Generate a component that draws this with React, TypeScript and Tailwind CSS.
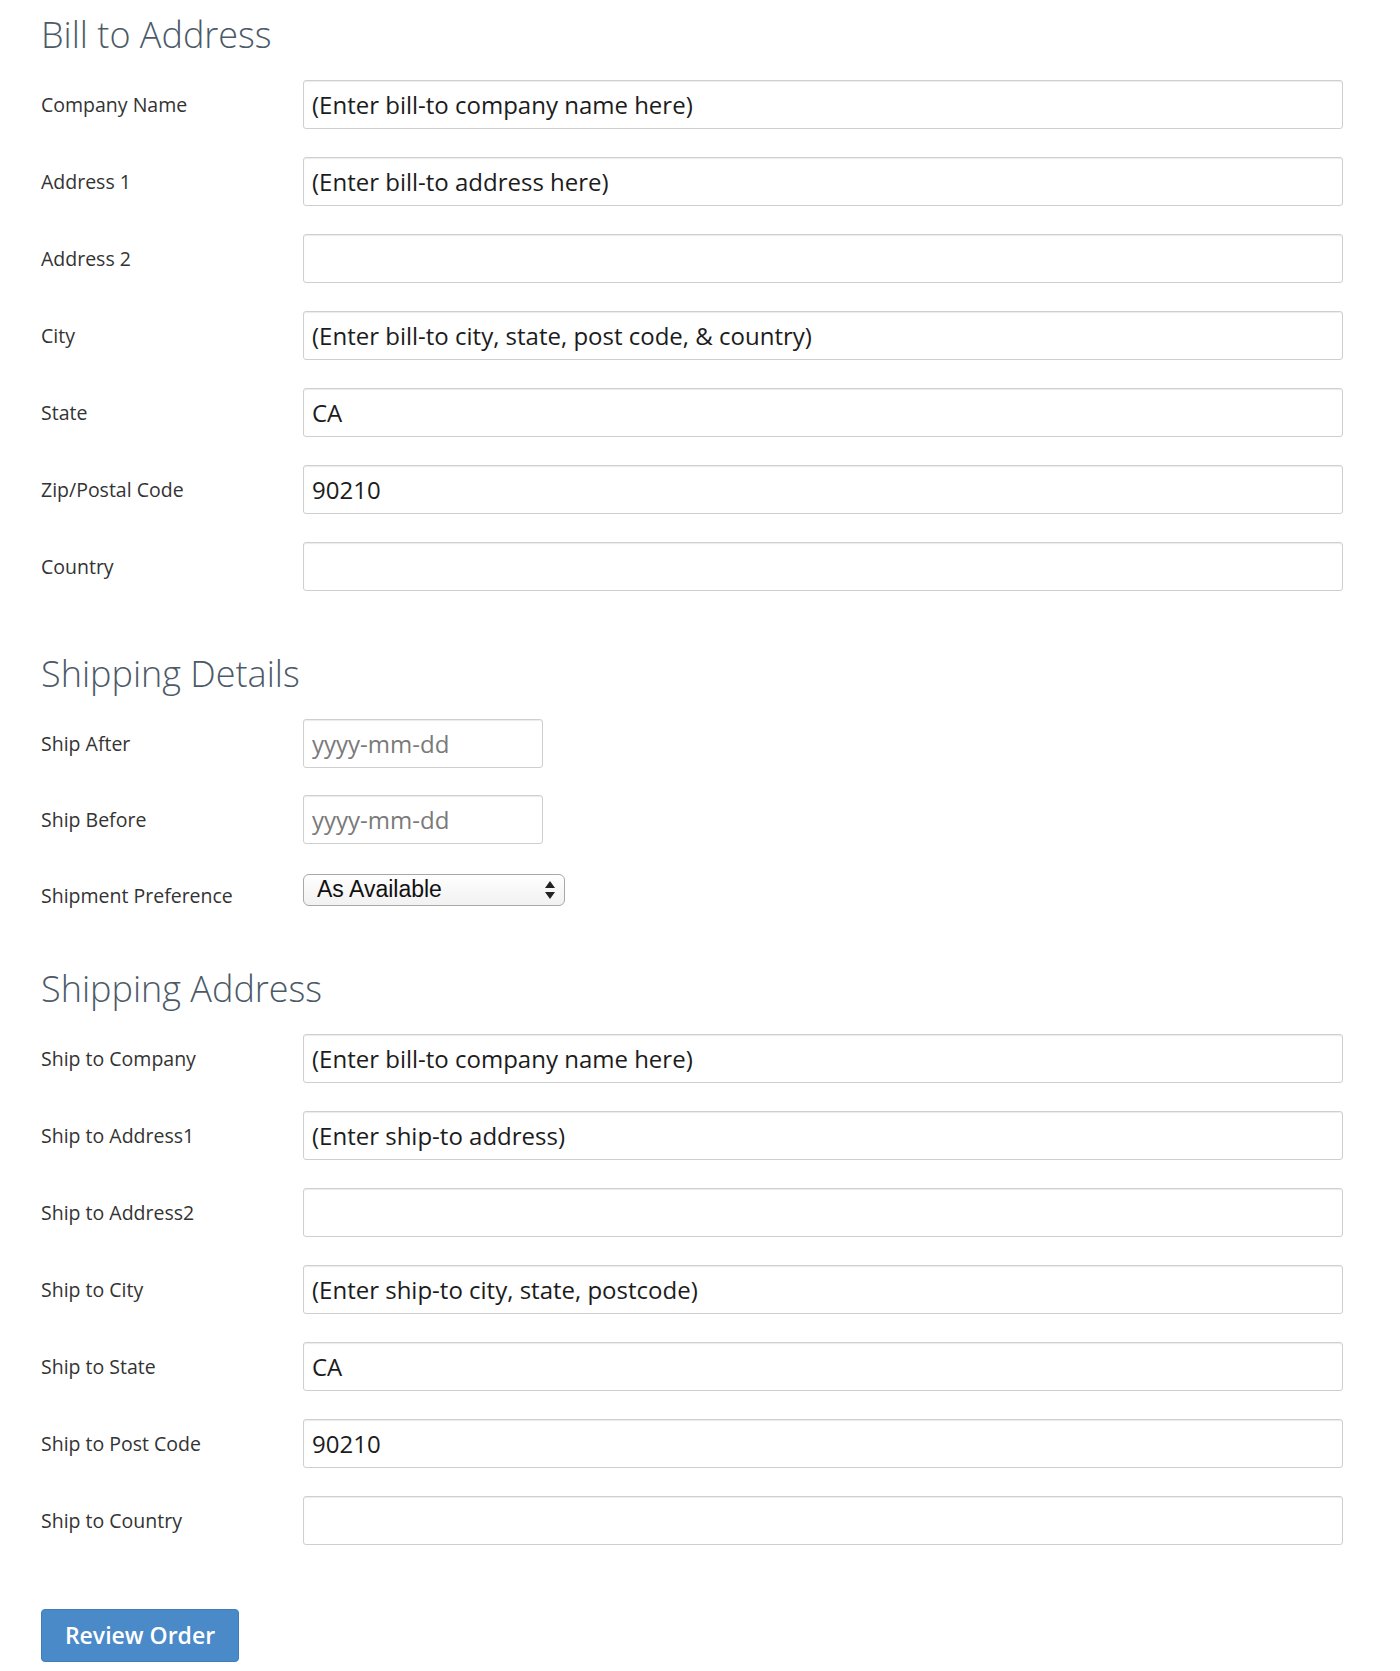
import React from "react";

type Field = { label: string; value?: string; placeholder?: string };

const BILL_FIELDS: Field[] = [
  { label: "Company Name", value: "(Enter bill-to company name here)" },
  { label: "Address 1", value: "(Enter bill-to address here)" },
  { label: "Address 2" },
  { label: "City", value: "(Enter bill-to city, state, post code, & country)" },
  { label: "State", value: "CA" },
  { label: "Zip/Postal Code", value: "90210" },
  { label: "Country" },
];

const SHIP_FIELDS: Field[] = [
  { label: "Ship to Company", value: "(Enter bill-to company name here)" },
  { label: "Ship to Address1", value: "(Enter ship-to address)" },
  { label: "Ship to Address2" },
  { label: "Ship to City", value: "(Enter ship-to city, state, postcode)" },
  { label: "Ship to State", value: "CA" },
  { label: "Ship to Post Code", value: "90210" },
  { label: "Ship to Country" },
];

const inputCls =
  "h-[49px] rounded-[3px] border border-[#cfcfcf] bg-white px-[8px] text-[24px] text-[#1c1c1c] shadow-[inset_0_1px_1px_rgba(0,0,0,0.08)] outline-none placeholder:text-[#7a7a7a]";

function Heading({ children }: { children: React.ReactNode }) {
  return (
    <h2 className="mb-[25px] text-[36px] font-light leading-[40px] text-[#4c5a68]">{children}</h2>
  );
}

function Row({ label, children }: { label: string; children: React.ReactNode }) {
  return (
    <div className="flex h-[49px] items-center">
      <label className="w-[262px] shrink-0 text-[19.5px] text-[#333]">{label}</label>
      {children}
    </div>
  );
}

export default function App() {
  return (
    <div
      className="min-h-[1671px] bg-white pl-[41px] pr-[57px] pt-[15px]"
      style={{ fontFamily: '"Open Sans", "Noto Sans", sans-serif' }}
    >
      {/* Bill to */}
      <section>
        <Heading>Bill to Address</Heading>
        <div className="flex flex-col gap-[28px]">
          {BILL_FIELDS.map(f => (
            <Row key={f.label} label={f.label}>
              <input className={`${inputCls} flex-1`} defaultValue={f.value ?? ""} />
            </Row>
          ))}
        </div>
      </section>

      {/* Shipping details */}
      <section className="mt-[63px]">
        <Heading>Shipping Details</Heading>
        <div className="flex flex-col gap-[27px]">
          <Row label="Ship After">
            <input className={`${inputCls} w-[240px]`} placeholder="yyyy-mm-dd" />
          </Row>
          <Row label="Ship Before">
            <input className={`${inputCls} w-[240px]`} placeholder="yyyy-mm-dd" />
          </Row>
          <div className="flex h-[49px] items-center">
            <label className="w-[262px] shrink-0 text-[19.5px] text-[#333]">Shipment Preference</label>
            <div
              className="-mt-[12px] flex h-[32px] w-[262px] items-center justify-between rounded-[6px] border border-[#a8a8a8] bg-gradient-to-b from-white to-[#f1f1f1] pl-[13px] pr-[8px] text-[23px] text-[#111]"
              style={{ fontFamily: '"Liberation Sans", Arial, sans-serif' }}
            >
              <span className="leading-none">As Available</span>
              <svg width="12" height="22" viewBox="0 0 12 22" className="text-[#222]">
                <path d="M6 2 L11 9 L1 9 Z" fill="currentColor" />
                <path d="M1 13 L11 13 L6 20 Z" fill="currentColor" />
              </svg>
            </div>
          </div>
        </div>
      </section>

      {/* Shipping address */}
      <section className="mt-[49px]">
        <Heading>Shipping Address</Heading>
        <div className="flex flex-col gap-[28px]">
          {SHIP_FIELDS.map(f => (
            <Row key={f.label} label={f.label}>
              <input className={`${inputCls} flex-1`} defaultValue={f.value ?? ""} />
            </Row>
          ))}
        </div>
      </section>

      <button className="mt-[64px] h-[53px] w-[198px] rounded-[4px] border border-[#3f7dbb] bg-[#4a8ac9] text-[23px] font-semibold text-white">
        Review Order
      </button>
    </div>
  );
}
